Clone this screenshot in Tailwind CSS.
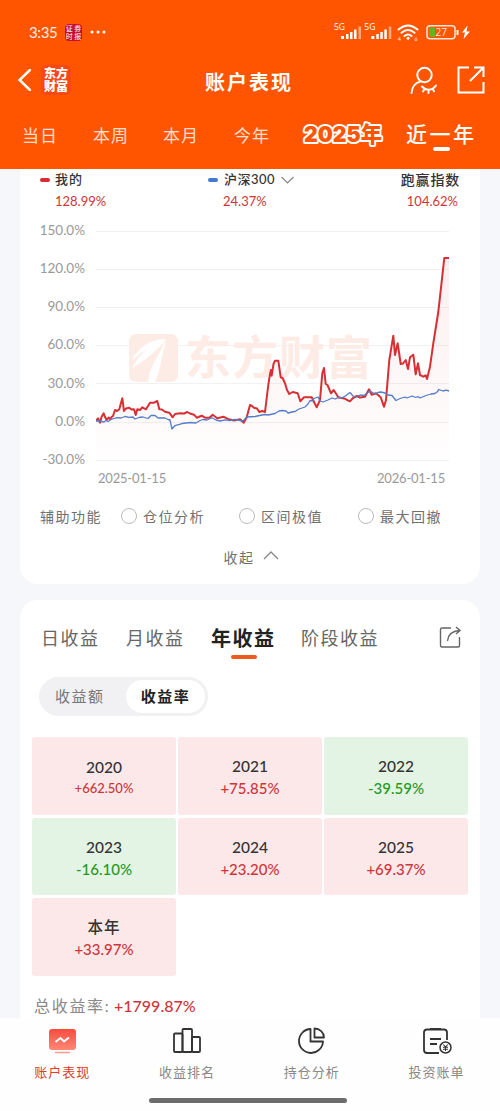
<!DOCTYPE html>
<html lang="zh-CN">
<head>
  <meta charset="UTF-8">
  <meta name="viewport" content="width=device-width, initial-scale=1.0">
  <title>账户表现</title>
  <script src="https://cdn.jsdelivr.net/npm/@tailwindcss/browser@4"></script>
</head>
<body class="h-[1111px] w-[500px] overflow-hidden bg-[#f6f7fa] font-['Lato','Noto_Sans_CJK_SC',sans-serif] text-[#333] flex flex-col whitespace-nowrap">

  <header class="h-[169px] shrink-0 bg-[#ff5400] text-white">
    <!-- 状态栏 -->
    <div class="flex h-[60px] items-center pt-1 pl-[29px] pr-[29px]">
      <span class="w-9 text-[15px] tracking-[-.4px] text-white/90">3:35</span>
      <span class="grid h-[17px] w-[17px] grid-cols-2 place-items-center rounded-[4px] bg-[#c5102f] text-[7px] leading-[8px]"><i class="not-italic">证</i><i class="not-italic">券</i><i class="not-italic">时</i><i class="not-italic">报</i></span>
      <svg class="ml-2" width="16" height="4" viewBox="0 0 16 4" fill="#fff"><circle cx="2" cy="2" r="1.5"/><circle cx="8" cy="2" r="1.5"/><circle cx="14" cy="2" r="1.5"/></svg>
      <svg class="ml-auto" width="138" height="20" viewBox="333 22 138 20" fill="#fff">
        <g id="signal">
          <text x="334" y="30" font-size="8.500" font-family="Open Sans, sans-serif">5G</text>
          <path d="M341 36h3v3h-3zM346 34h2.500v5H346zM350 32h2.500v7H350zM354 29.500h2.500V39H354z"/><path d="M358.500 26.500h2.500V39h-2.500z" opacity=".5"/>
        </g>
        <use href="#signal" x="30.300"/>
        <g fill="none" stroke="#fff" stroke-width="2" stroke-linecap="round"><path d="M398.500 29.500q9.500-8 19 0M401.500 32.800q6.500-5.500 13 0M404.500 36q3.500-3 7 0"/></g>
        <circle cx="408" cy="38.300" r="1.500"/>
        <text x="398" y="40.500" font-size="5">4</text><text x="414.500" y="40.500" font-size="5">6</text>
        <rect x="427" y="25.700" width="28" height="13" rx="3" fill="none" stroke="#fff" stroke-opacity=".85" stroke-width="1.500"/>
        <path d="M429 27.500h6v9.500h-6z" fill="#62b520"/><path d="M456.500 30h2v5h-2z"/>
        <text x="435.500" y="36" font-size="10" font-family="Open Sans, sans-serif" fill-opacity=".9">27</text>
        <path d="M467.500 25.500l-5.500 7h3l-1.500 6.500 6.500-7.500h-3.500z"/>
      </svg>
    </div>

    <!-- 标题栏 -->
    <div class="flex h-10 items-center pl-[18px] pr-[15px]">
      <svg width="13" height="22" viewBox="0 0 13 22" fill="none" stroke="#fff" stroke-width="2.500" stroke-linecap="round"><path d="M12 1L1.500 11 12 21"/></svg>
      <div class="ml-[10px] grid h-[30px] w-[30px] place-items-center rounded-md bg-[#fb4714] text-[12px] font-black leading-[13px]"><span>东方<br>财富</span></div>
      <h1 class="ml-[134px] pt-1 text-[20px] font-bold tracking-[2px]">账户表现</h1>
      <svg class="ml-auto" width="28" height="29" viewBox="0 0 28 29" fill="none" stroke="#fff" stroke-width="2" stroke-linecap="round"><circle cx="14.500" cy="9" r="7.200"/><path d="M1.500 27c.5-6 4-10.500 9-11.500M12 20.500c4 4.500 10 4.500 14-1M14.500 23l-1.500 2.500M18.500 24v3M22.500 22.800l1.500 2.500"/></svg>
      <svg class="ml-[19px]" width="28" height="28" viewBox="0 0 28 28" fill="none" stroke="#fff" stroke-width="2"><path d="M12 1.500H1.500v25h25V16M17 1.500h9.500V11M26 2L13 15"/></svg>
    </div>

    <!-- 时间区间 -->
    <nav class="flex h-[69px] items-start pl-[22px] pt-[24px] text-[17px] leading-6 text-white/80">
      <span class="w-[71px] tracking-[1px]">当日</span>
      <span class="w-[70px] tracking-[1px]">本周</span>
      <span class="w-[71px] tracking-[1px]">本月</span>
      <span class="w-[68px] tracking-[1px]">今年</span>
      <svg class="-mt-[5px]" width="86" height="30" viewBox="0 0 86 30"><text x="2" y="23" textLength="78" lengthAdjust="spacingAndGlyphs" font-family="Inter, Noto Sans CJK SC, sans-serif" font-size="22" font-weight="900" fill="#ff5400" stroke="#fff" stroke-width="4" stroke-linejoin="round" paint-order="stroke">2025年</text></svg>
      <span class="ml-[18px] -mt-1 flex flex-col items-center text-[21px] font-medium leading-7 text-white"><b class="font-medium tracking-[2.500px]">近一年</b><i class="-mt-[1px] h-1 w-[17px] rounded-full bg-white"></i></span>
    </nav>
  </header>

  <main class="h-[849px] shrink-0 overflow-hidden px-5">
    <section class="h-[415px] rounded-b-[18px] bg-white px-5">
      <!-- 图例 -->
      <div class="flex h-[43px] text-[13px]">
        <div class="w-[168px]">
          <div class="flex h-[21px] items-center gap-[5px]"><i class="h-1 w-[10px] rounded-full bg-[#d92b32]"></i><span class="tracking-[1px] font-medium">我的</span></div>
          <p class="pl-[15px] text-[13px] leading-[22px] text-[#cf343b]">128.99%</p>
        </div>
        <div class="w-[110px]">
          <div class="flex h-[21px] items-center gap-[6px]"><i class="h-1 w-[10px] rounded-full bg-[#4479cf]"></i><span class="font-medium tracking-[.5px]">沪深300</span><svg width="13" height="8" viewBox="0 0 13 8" fill="none" stroke="#888" stroke-width="1.200"><path d="M.5 1l6 6 6-6"/></svg></div>
          <p class="pl-[15px] text-[13px] leading-[22px] text-[#cf343b]">24.37%</p>
        </div>
        <div class="ml-auto text-right">
          <div class="h-[21px] text-[14px] font-medium leading-[21px] tracking-[.8px]">跑赢指数</div>
          <p class="pr-[2px] text-[13px] leading-[22px] text-[#cf343b]">104.62%</p>
        </div>
      </div>

      <!-- 收益曲线 -->
      <div class="flex">
        <div class="-mt-[1px] flex h-[267px] w-[45px] flex-col text-right text-[13.5px] text-[#999]">
          <span class="flex flex-1 items-center justify-end">150.0%</span>
          <span class="flex flex-1 items-center justify-end">120.0%</span>
          <span class="flex flex-1 items-center justify-end">90.0%</span>
          <span class="flex flex-1 items-center justify-end">60.0%</span>
          <span class="flex flex-1 items-center justify-end">30.0%</span>
          <span class="flex flex-1 items-center justify-end">0.0%</span>
          <span class="flex flex-1 items-center justify-end">-30.0%</span>
        </div>
        <svg class="ml-[11px]" width="354" height="267" viewBox="96 212 354 267" fill="none">
          <defs><linearGradient id="area" x1="0" y1="0" x2="0" y2="1"><stop offset="0" stop-color="#e03030" stop-opacity=".08"/><stop offset="1" stop-color="#e03030" stop-opacity=".008"/></linearGradient></defs>
          <path d="M96 231.500h353M96 269.500h353M96 307.500h353M96 345.500h353M96 383.500h353M96 422.500h353M96 460.500h353" stroke="#f1f1f2"/>
          <rect x="129" y="334" width="49" height="48" rx="7" fill="#fdebe6"/>
          <path d="M133 359c8-13 20-19 32-19-14 5-25 11-32 19zM134 366c8-14 20-22 31-26-8 9-19 19-31 26zM149 382c0-15 10-24 16-39-5 12-4 26-11 39z" fill="#fff" stroke="#fff" stroke-width="1.500"/>
          <text x="185" y="374" font-family="Noto Sans CJK SC, sans-serif" font-size="46" font-weight="700" fill="#fdebe6" textLength="187">东方财富</text>
          <path d="M96 421L104 414 112 417 122 399 130 408 157 401 160 409 172 417 187 412 205 418 244 422 250 405 260 412 265 412 275 361 279 361 290 394 300 401 312 397 317 407 324 368 331 393 350 401 369 390 384 406 393 336 408 366 427 379 444.300 258H449V460H96Z" fill="url(#area)"/>
          <polyline id="mine" stroke="#d72f34" stroke-width="2" stroke-linejoin="round" points="96,420.700 98,418.300 100,422.700 101.500,417 103.700,413.300 105,417 106.700,420 108.500,417.500 110,419 111.700,417 113,416 115,410 117,411 119.300,409.300 122.300,398.300 124,411 126,408.500 129.300,407.700 131.500,409.500 134,409.300 135.700,415 137.300,409.300 140,410 142.300,407.300 146,409.300 150,402.700 154,402.700 157.300,401 159.300,409.300 162,409.500 165,411.700 169.300,412.700 172.700,417.300 175,414 180,413.300 184,413.500 187.300,412 190,413.500 194,414.700 196.700,417.700 201.700,415.700 205,417.700 209.300,417.700 212.700,414.700 217.300,418.300 223.300,416.700 229,419.300 234,420.500 240,419.300 243.700,422.700 246.700,417.300 250,405 252,406 254,407.700 257,408.500 259.300,412 262,411 265,412 268.300,385 270,374 271,370 271.700,375.700 273.500,364 275,360.700 278.300,360.700 280.700,377.300 282.500,378 285,383.300 287,390 289.300,394 292.700,392 297.700,393.300 300.300,401.300 304,397.300 311.700,397.300 314,402 316.700,407.300 320,400 322.300,373.300 324,368 325.700,384 327.500,385 331,393.300 333.700,390 338.300,397.300 345,398.700 347,400 350,401.300 353,398 356.700,396 360,397.500 365,396.700 369,389.300 371.700,394.700 376,393.300 380.700,397.300 384,406.700 386,400 389.300,360 393.300,335.700 395,355 397.700,343.300 400.700,364 403,363.500 405.700,360 408,369 410,357.300 413.300,354.700 415.700,374.300 418,363.300 420,375 423.300,376.700 425.700,375.300 427,379 430,366.700 433.300,343.300 438.300,312 444.300,258 449,258"/>
          <polyline id="csi300" stroke="#537cc9" stroke-width="1.300" stroke-linejoin="round" points="96,421 100,421 104,422 106,420.500 108,421.500 111,419.500 117,417.700 121,418 125,416.500 129,417.300 133,417 135,419 139,417.500 143,417 148,418.500 151,415.500 155,415.500 158,418 165,418 168,419.500 170,420 172,429 175,425.500 182,423.500 190,422.500 196,423 200,420.500 203,419.500 207,420 212,417.700 216,420 220,421 225,419.800 230,420.500 235,419.500 243,421 247,417 255,416.500 262,415 265,414.500 268,415 275,413.500 279,411 282,410.500 286,411 288,413 292,412 295,411.500 299,409 302,408 305,407 308,404 310,400.500 312,401 314,398.500 318,397 320,401 323,402 328,400 332,398 335,399 339,397.300 342,398 346,395.500 350,392.500 353,396 356,397 360,395 364,395.500 370,391 375,394 378,392.500 381,392 385,393 388,395 392,395.500 394,398 396,400.500 400,398.500 405,397 407,398 412,396 416,397.500 418,396.500 420,398 426,395.500 431,394 435,393.500 437,392 439,389.500 443,391 446,390.200 449,391"/>
        </svg>
      </div>
      <div class="-mt-[11px] flex h-[22px] items-center justify-between pl-[58px] pr-[15px] text-[13px] tracking-[-.2px] text-[#999]"><span>2025-01-15</span><span>2026-01-15</span></div>

      <!-- 辅助功能 -->
      <div class="mt-[15px] flex h-[22px] items-center text-[14px] tracking-[1.500px] text-[#707070]">
        <span class="w-[81px]">辅助功能</span>
        <label class="flex w-[118px] items-center gap-[6px]"><i class="h-4 w-4 rounded-full border border-[#bbb]"></i>仓位分析</label>
        <label class="flex w-[119px] items-center gap-[6px]"><i class="h-4 w-4 rounded-full border border-[#bbb]"></i>区间极值</label>
        <label class="flex items-center gap-[6px]"><i class="h-4 w-4 rounded-full border border-[#bbb]"></i>最大回撤</label>
      </div>
      <div class="mt-[18px] flex h-6 items-center justify-center gap-2 pl-0.5 text-[14px] tracking-[1.500px] text-[#707070]">收起<svg class="-mt-1" width="16" height="9" viewBox="0 0 16 9" fill="none" stroke="#888" stroke-width="1.300"><path d="M1 8l7-7 7 7"/></svg></div>
    </section>

    <section class="mt-4 h-[440px] rounded-t-[18px] bg-white pt-[26px]">
      <div class="flex h-[36px] items-start pl-[21px] pr-[18px] text-[18px] leading-6 tracking-[1.500px] text-[#666]">
        <span class="w-[85px]">日收益</span>
        <span class="w-[85px]">月收益</span>
        <span class="flex w-[90px] flex-col text-[20px] font-bold text-[#222]">年收益<i class="ml-5 mt-[5px] h-1 w-[26px] rounded-full bg-[#ee5a1c]"></i></span>
        <span>阶段收益</span>
        <svg class="ml-auto" width="23" height="23" viewBox="0 0 23 23" fill="none" stroke="#666" stroke-width="1.400"><path d="M12 2H3Q1.500 2 1.500 3.500v16Q1.500 21 3 21h16q1.500 0 1.500-1.500V11M8.500 15C9 9 13 5 20.500 4.500M17 1l4 3.500L17 8"/></svg>
      </div>

      <div class="ml-[19px] mt-[15px] flex h-[39px] w-[169px] items-center rounded-full bg-[#f1f1f3] p-[3px] text-[15px] tracking-[1.500px]">
        <span class="w-[84px] pl-[13px] text-[#777]">收益额</span>
        <span class="grid h-[33px] w-[79px] place-items-center rounded-full bg-white font-bold text-[#222]">收益率</span>
      </div>

      <div class="ml-3 mt-[21px] grid w-[436px] auto-rows-[77.6px] grid-cols-3 gap-x-[2px] gap-y-[3px] text-center text-[15.5px] font-medium text-[#333]">
        <div class="rounded-[3px] bg-[#fde8e9] pt-[19px]"><p class="leading-[22px]">2020</p><p class="text-[13px] leading-5 text-[#cf343b]">+662.50%</p></div>
        <div class="rounded-[3px] bg-[#fde8e9] pt-[18px]"><p class="leading-[22px]">2021</p><p class="text-[15px] leading-[22px] text-[#cf343b]">+75.85%</p></div>
        <div class="rounded-[3px] bg-[#e3f4e4] pt-[18px]"><p class="leading-[22px]">2022</p><p class="text-[15px] leading-[22px] text-[#1f991f]">-39.59%</p></div>
        <div class="rounded-[3px] bg-[#e3f4e4] pt-[18px]"><p class="leading-[22px]">2023</p><p class="text-[15px] leading-[22px] text-[#1f991f]">-16.10%</p></div>
        <div class="rounded-[3px] bg-[#fde8e9] pt-[18px]"><p class="leading-[22px]">2024</p><p class="text-[15px] leading-[22px] text-[#cf343b]">+23.20%</p></div>
        <div class="rounded-[3px] bg-[#fde8e9] pt-[18px]"><p class="leading-[22px]">2025</p><p class="text-[15px] leading-[22px] text-[#cf343b]">+69.37%</p></div>
        <div class="rounded-[3px] bg-[#fde8e9] pt-[18px]"><p class="leading-[22px] tracking-[1px]">本年</p><p class="text-[15px] leading-[22px] text-[#cf343b]">+33.97%</p></div>
      </div>

      <p class="ml-[14px] mt-[18px] flex items-center text-[16px] leading-6 text-[#888]"><span class="w-[80px] tracking-[1.700px]">总收益率:</span><span class="font-medium text-[#cf343b]">+1799.87%</span></p>
    </section>
  </main>

  <!-- 底部导航 -->
  <footer class="h-[93px] shrink-0 bg-[#fefefe]">
    <nav class="grid w-[499px] grid-cols-4 pt-[9px] text-[13px] tracking-[1px] text-[#888]">
      <div class="flex flex-col items-center gap-[7px] text-[#d94132]">
        <svg width="30" height="28" viewBox="0 0 30 28"><defs><linearGradient id="tv" x1="0" y1="0" x2="0" y2="1"><stop stop-color="#f94b3c"/><stop offset="1" stop-color="#ff8877"/></linearGradient></defs><rect x="2" y="2" width="27" height="21" rx="3" fill="url(#tv)"/><path d="M8.500 15l5-4 3.500 3.500 5-4" fill="none" stroke="#fff" stroke-width="2"/><path d="M8 25.500h15" stroke="#ff9b8d" stroke-width="1.500"/></svg>
        <span class="leading-5">账户表现</span>
      </div>
      <div class="flex flex-col items-center gap-[7px]">
        <svg width="30" height="28" viewBox="0 0 30 28" fill="none" stroke="#333" stroke-width="1.800" stroke-linejoin="round"><rect x="2" y="6.500" width="8.500" height="18.500" rx="1"/><rect x="10.500" y="2" width="9.500" height="23" rx="1"/><rect x="20" y="10" width="8" height="15" rx="1"/></svg>
        <span class="leading-5">收益排名</span>
      </div>
      <div class="flex flex-col items-center gap-[7px]">
        <svg width="30" height="28" viewBox="0 0 30 28" fill="none" stroke="#333" stroke-width="1.800" stroke-linejoin="round"><path d="M13.500 2A12 12 0 1 0 26 14.500H13.500zM17.500 1.500v9H27A9.500 9 0 0 0 17.500 1.500z"/></svg>
        <span class="leading-5">持仓分析</span>
      </div>
      <div class="flex flex-col items-center gap-[7px]">
        <svg width="30" height="28" viewBox="0 0 30 28" fill="none" stroke="#333" stroke-width="1.800"><path d="M17 26H5q-3 0-3-3V5.500Q2 2.500 5 2.500h17q3 0 3 3V13M8 2h11M8 12h11M8 17h7"/><circle cx="23.500" cy="20.500" r="5.500" fill="#fff" stroke-width="1.500"/><path d="M21.300 17.500l2.200 2.500 2.200-2.500M23.500 20v4M21 20.300h5M21 22.200h5" stroke-width="1.100"/></svg>
        <span class="leading-5">投资账单</span>
      </div>
    </nav>
    <div class="ml-[149px] mt-[16px] h-[5px] w-[198px] rounded-full bg-[#6c6c6c]"></div>
  </footer>
</body>
</html>
